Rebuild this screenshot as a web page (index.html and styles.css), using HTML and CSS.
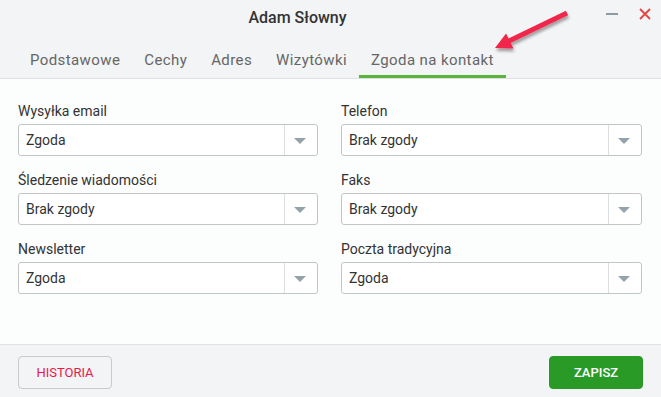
FILE: index.html
```html
<!DOCTYPE html>
<html lang="pl">
<head>
<meta charset="utf-8">
<title>Adam Słowny</title>
<link rel="stylesheet" href="styles.css">
</head>
<body>
<div class="window">
  <header class="header">
    <div class="titlebar">
      <span class="title">Adam Słowny</span>
      <div class="controls">
        <span class="minimize"></span>
        <svg class="close" width="12" height="12" viewBox="0 0 12 12"><path d="M1 1L11 11M11 1L1 11" stroke="#e8433f" stroke-width="1.8" fill="none"/></svg>
      </div>
    </div>
    <nav class="tabs">
      <span class="tab">Podstawowe</span>
      <span class="tab">Cechy</span>
      <span class="tab">Adres</span>
      <span class="tab">Wizytówki</span>
      <span class="tab active">Zgoda na kontakt</span>
    </nav>
  </header>
  <main class="content">
    <div class="field">
      <label class="label">Wysyłka email</label>
      <div class="select"><span class="value">Zgoda</span><span class="caret"></span></div>
    </div>
    <div class="field">
      <label class="label">Telefon</label>
      <div class="select"><span class="value">Brak zgody</span><span class="caret"></span></div>
    </div>
    <div class="field">
      <label class="label">Śledzenie wiadomości</label>
      <div class="select"><span class="value">Brak zgody</span><span class="caret"></span></div>
    </div>
    <div class="field">
      <label class="label">Faks</label>
      <div class="select"><span class="value">Brak zgody</span><span class="caret"></span></div>
    </div>
    <div class="field">
      <label class="label">Newsletter</label>
      <div class="select"><span class="value">Zgoda</span><span class="caret"></span></div>
    </div>
    <div class="field">
      <label class="label">Poczta tradycyjna</label>
      <div class="select"><span class="value">Zgoda</span><span class="caret"></span></div>
    </div>
  </main>
  <footer class="footer">
    <button class="btn btn-history">HISTORIA</button>
    <button class="btn btn-save">ZAPISZ</button>
  </footer>
  <svg class="pointer" width="100" height="62" viewBox="0 0 100 62">
    <defs>
      <filter id="sh" x="-20%" y="-20%" width="140%" height="160%">
        <feDropShadow dx="1" dy="3" stdDeviation="1.5" flood-color="#000" flood-opacity="0.35"/>
      </filter>
    </defs>
    <g filter="url(#sh)" fill="#f0284c">
      <path d="M87 13 L29 41" stroke="#f0284c" stroke-width="5" stroke-linecap="butt"/>
      <polygon points="15,48 26,33.5 33.5,48.5"/>
    </g>
  </svg>
</div>
</body>
</html>
```

FILE: styles.css
```css
* { box-sizing: border-box; }
html, body { margin: 0; padding: 0; }
body {
  font-family: Roboto, "Noto Sans", sans-serif;
  background: #f2f4f5;
  color: #333;
}
.window {
  position: relative;
  width: 661px;
  height: 397px;
  display: flex;
  flex-direction: column;
  background: #f2f4f5;
}
.header {
  background: #f2f4f5;
  border-bottom: 1px solid #dde1e3;
}
.titlebar {
  position: relative;
  height: 35px;
  display: flex;
  align-items: center;
  justify-content: center;
}
.title {
  font-size: 16px;
  font-weight: 500;
  color: #333;
  margin-right: 66px;
}
.controls {
  position: absolute;
  right: 10px;
  top: 8px;
  display: flex;
  align-items: center;
  gap: 21px;
}
.minimize {
  display: block;
  width: 12px;
  height: 2px;
  background: #8c9ca2;
}
.close { display: block; }
.tabs {
  display: flex;
  padding-left: 18px;
  height: 43px;
}
.tab {
  padding: 16px 12px 6px;
  line-height: 18px;
  font-size: 15px;
  letter-spacing: 0.4px;
  color: #666;
  border-bottom: 3px solid transparent;
}
.tab.active {
  border-bottom-color: #5bb53d;
  color: #666;
}
.content {
  flex: 1;
  background: #fcfdfd;
  padding: 24px 19px 0 18px;
  display: grid;
  grid-template-columns: 300px 301px;
  column-gap: 23px;
  row-gap: 16px;
  align-content: start;
}
.field {
  display: flex;
  flex-direction: column;
}
.label {
  font-size: 14px;
  line-height: 16px;
  color: #333;
  margin-bottom: 5px;
}
.select {
  height: 32px;
  border: 1px solid #c3c6c8;
  border-radius: 3px;
  background: #fff;
  display: flex;
  align-items: center;
}
.value {
  flex: 1;
  padding-left: 7px;
  font-size: 14px;
  color: #333;
}
.caret {
  width: 33px;
  height: 100%;
  border-left: 1px solid #dcdfe0;
  position: relative;
}
.caret::after {
  content: "";
  position: absolute;
  left: 9px;
  top: 13px;
  border-left: 6px solid transparent;
  border-right: 6px solid transparent;
  border-top: 6px solid #93a3a9;
}
.footer {
  height: 53px;
  border-top: 1px solid #e0e3e5;
  background: #f2f4f5;
  display: flex;
  justify-content: space-between;
  align-items: flex-start;
  padding: 11px 18px 0 18px;
}
.btn {
  font-family: Roboto, "Noto Sans", sans-serif;
  font-size: 13px;
  height: 33px;
  width: 94px;
  border-radius: 4px;
  cursor: pointer;
  padding: 0;
}
.btn-history {
  background: #f2f4f5;
  border: 1px solid #c8cbcd;
  color: #e8194a;
}
.btn-save {
  background: #2a9a27;
  border: 1px solid #2a9a27;
  color: #fff;
  font-weight: 500;
}
.pointer {
  position: absolute;
  left: 480px;
  top: 0;
}
```
